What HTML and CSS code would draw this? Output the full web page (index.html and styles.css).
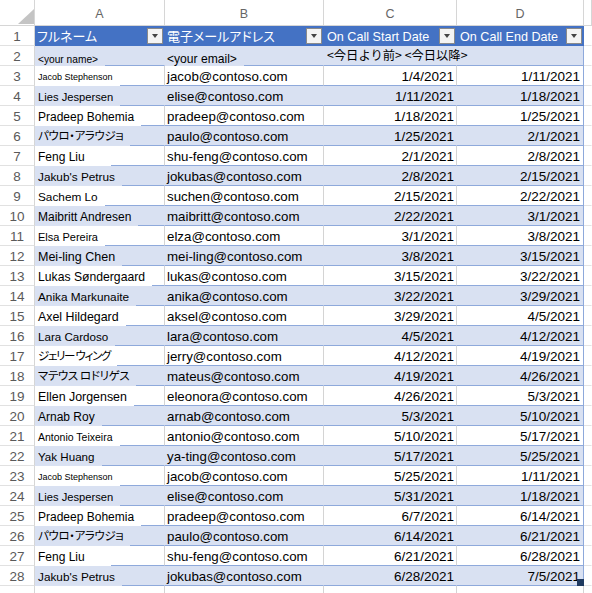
FILE: index.html
```html
<!DOCTYPE html>
<html lang="ja">
<head>
<meta charset="utf-8">
<title>On Call Schedule</title>
<link rel="stylesheet" href="styles.css">
</head>
<body>
<div class="sheet">
  <div class="row colhead">
    <div class="corner"><svg width="16" height="15" viewBox="0 0 16 15"><polygon points="16,0 16,15 0,15" fill="#c4c4c4"/></svg></div>
    <div class="ch">A</div>
    <div class="ch">B</div>
    <div class="ch">C</div>
    <div class="ch">D</div>
    <div class="ch"></div>
  </div>

  <div class="row tblhead">
    <div class="rn">1</div>
    <div class="cell"><span class="tht jp">フルネーム</span><span class="dd"></span></div>
    <div class="cell"><span class="tht jp">電子メールアドレス</span><span class="dd"></span></div>
    <div class="cell pc"><span class="tht">On Call Start Date</span><span class="dd"></span></div>
    <div class="cell pc d"><span class="tht">On Call End Date</span><span class="dd"></span></div>
    <div class="e"></div>
  </div>

  <div class="row band r2">
    <div class="rn">2</div>
    <div class="cell name"><span class="nm f102">&lt;your name&gt;</span></div>
    <div class="cell name"><span class="nm em f121">&lt;your email&gt;</span></div>
    <div class="cell pc spill"><span class="jpnote">&lt;今日より前&gt; &lt;今日以降&gt;</span></div>
    <div class="cell d"></div>
    <div class="e"></div>
  </div>

  <div class="row plain"><div class="rn">3</div><div class="cell name"><span class="nm f9">Jacob Stephenson</span></div><div class="cell mail">jacob@contoso.com</div><div class="cell num">1/4/2021</div><div class="cell num d">1/11/2021</div><div class="e"></div></div>
  <div class="row band"><div class="rn">4</div><div class="cell name"><span class="nm f112">Lies Jespersen</span></div><div class="cell mail">elise@contoso.com</div><div class="cell num">1/11/2021</div><div class="cell num d">1/18/2021</div><div class="e"></div></div>
  <div class="row plain"><div class="rn">5</div><div class="cell name"><span class="nm f12">Pradeep Bohemia</span></div><div class="cell mail">pradeep@contoso.com</div><div class="cell num">1/18/2021</div><div class="cell num d">1/25/2021</div><div class="e"></div></div>
  <div class="row band"><div class="rn">6</div><div class="cell name"><span class="nm jp">パウロ・アラウジョ</span></div><div class="cell mail">paulo@contoso.com</div><div class="cell num">1/25/2021</div><div class="cell num d">2/1/2021</div><div class="e"></div></div>
  <div class="row plain"><div class="rn">7</div><div class="cell name"><span class="nm f12 wide">Feng Liu</span></div><div class="cell mail">shu-feng@contoso.com</div><div class="cell num">2/1/2021</div><div class="cell num d">2/8/2021</div><div class="e"></div></div>
  <div class="row band"><div class="rn">8</div><div class="cell name"><span class="nm f118">Jakub's Petrus</span></div><div class="cell mail">jokubas@contoso.com</div><div class="cell num">2/8/2021</div><div class="cell num d">2/15/2021</div><div class="e"></div></div>
  <div class="row plain"><div class="rn">9</div><div class="cell name"><span class="nm f118">Sachem Lo</span></div><div class="cell mail">suchen@contoso.com</div><div class="cell num">2/15/2021</div><div class="cell num d">2/22/2021</div><div class="e"></div></div>
  <div class="row band"><div class="rn">10</div><div class="cell name"><span class="nm f12">Maibritt Andresen</span></div><div class="cell mail">maibritt@contoso.com</div><div class="cell num">2/22/2021</div><div class="cell num d">3/1/2021</div><div class="e"></div></div>
  <div class="row plain"><div class="rn">11</div><div class="cell name"><span class="nm f11">Elsa Pereira</span></div><div class="cell mail">elza@contoso.com</div><div class="cell num">3/1/2021</div><div class="cell num d">3/8/2021</div><div class="e"></div></div>
  <div class="row band"><div class="rn">12</div><div class="cell name"><span class="nm f125">Mei-ling Chen</span></div><div class="cell mail">mei-ling@contoso.com</div><div class="cell num">3/8/2021</div><div class="cell num d">3/15/2021</div><div class="e"></div></div>
  <div class="row plain"><div class="rn">13</div><div class="cell name"><span class="nm f122">Lukas Søndergaard</span></div><div class="cell mail">lukas@contoso.com</div><div class="cell num">3/15/2021</div><div class="cell num d">3/22/2021</div><div class="e"></div></div>
  <div class="row band"><div class="rn">14</div><div class="cell name"><span class="nm f118">Anika Markunaite</span></div><div class="cell mail">anika@contoso.com</div><div class="cell num">3/22/2021</div><div class="cell num d">3/29/2021</div><div class="e"></div></div>
  <div class="row plain"><div class="rn">15</div><div class="cell name"><span class="nm f124">Axel Hildegard</span></div><div class="cell mail">aksel@contoso.com</div><div class="cell num">3/29/2021</div><div class="cell num d">4/5/2021</div><div class="e"></div></div>
  <div class="row band"><div class="rn">16</div><div class="cell name"><span class="nm f116">Lara Cardoso</span></div><div class="cell mail">lara@contoso.com</div><div class="cell num">4/5/2021</div><div class="cell num d">4/12/2021</div><div class="e"></div></div>
  <div class="row plain"><div class="rn">17</div><div class="cell name"><span class="nm jp tight">ジェリー ウィング</span></div><div class="cell mail">jerry@contoso.com</div><div class="cell num">4/12/2021</div><div class="cell num d">4/19/2021</div><div class="e"></div></div>
  <div class="row band"><div class="rn">18</div><div class="cell name"><span class="nm jp">マテウス ロドリゲス</span></div><div class="cell mail">mateus@contoso.com</div><div class="cell num">4/19/2021</div><div class="cell num d">4/26/2021</div><div class="e"></div></div>
  <div class="row plain"><div class="rn">19</div><div class="cell name"><span class="nm f124">Ellen Jorgensen</span></div><div class="cell mail">eleonora@contoso.com</div><div class="cell num">4/26/2021</div><div class="cell num d">5/3/2021</div><div class="e"></div></div>
  <div class="row band"><div class="rn">20</div><div class="cell name"><span class="nm f12">Arnab Roy</span></div><div class="cell mail">arnab@contoso.com</div><div class="cell num">5/3/2021</div><div class="cell num d">5/10/2021</div><div class="e"></div></div>
  <div class="row plain"><div class="rn">21</div><div class="cell name"><span class="nm f105">Antonio Teixeira</span></div><div class="cell mail">antonio@contoso.com</div><div class="cell num">5/10/2021</div><div class="cell num d">5/17/2021</div><div class="e"></div></div>
  <div class="row band"><div class="rn">22</div><div class="cell name"><span class="nm f116">Yak Huang</span></div><div class="cell mail">ya-ting@contoso.com</div><div class="cell num">5/17/2021</div><div class="cell num d">5/25/2021</div><div class="e"></div></div>
  <div class="row plain"><div class="rn">23</div><div class="cell name"><span class="nm f9">Jacob Stephenson</span></div><div class="cell mail">jacob@contoso.com</div><div class="cell num">5/25/2021</div><div class="cell num d">1/11/2021</div><div class="e"></div></div>
  <div class="row band"><div class="rn">24</div><div class="cell name"><span class="nm f112">Lies Jespersen</span></div><div class="cell mail">elise@contoso.com</div><div class="cell num">5/31/2021</div><div class="cell num d">1/18/2021</div><div class="e"></div></div>
  <div class="row plain"><div class="rn">25</div><div class="cell name"><span class="nm f12">Pradeep Bohemia</span></div><div class="cell mail">pradeep@contoso.com</div><div class="cell num">6/7/2021</div><div class="cell num d">6/14/2021</div><div class="e"></div></div>
  <div class="row band"><div class="rn">26</div><div class="cell name"><span class="nm jp">パウロ・アラウジョ</span></div><div class="cell mail">paulo@contoso.com</div><div class="cell num">6/14/2021</div><div class="cell num d">6/21/2021</div><div class="e"></div></div>
  <div class="row plain"><div class="rn">27</div><div class="cell name"><span class="nm f12 wide">Feng Liu</span></div><div class="cell mail">shu-feng@contoso.com</div><div class="cell num">6/21/2021</div><div class="cell num d">6/28/2021</div><div class="e"></div></div>
  <div class="row band"><div class="rn">28</div><div class="cell name"><span class="nm f118">Jakub's Petrus</span></div><div class="cell mail">jokubas@contoso.com</div><div class="cell num">6/28/2021</div><div class="cell num d last">7/5/2021<span class="handle"></span></div><div class="e"></div></div>

  <div class="row blank"><div class="rn">29</div><div class="bc"></div><div class="bc"></div><div class="bc"></div><div class="bc"></div><div class="e"></div></div>
</div>
</body>
</html>
```

FILE: styles.css
```css
html, body {
  margin: 0;
  padding: 0;
  background: #ffffff;
}

body {
  font-family: "Liberation Sans", Arial, sans-serif;
  color: #000;
  overflow: hidden;
}

.sheet {
  width: 592px;
}

.row {
  display: grid;
  grid-template-columns: 35px 130px 159px 133px 127px 8px;
  height: 20px;
}

.row > div {
  box-sizing: border-box;
  border-right: 1px solid transparent;
  border-bottom: 1px solid transparent;
  min-width: 0;
  white-space: nowrap;
}

/* column letters */
.colhead {
  height: 26px;
}

.colhead > div {
  background: #fff;
  border-right-color: #d6d6d6;
  border-bottom-color: #d6d6d6;
  color: #666;
  font-size: 12.5px;
  line-height: 16px;
  display: flex;
  align-items: flex-end;
  justify-content: center;
  padding-bottom: 3px;
}

.colhead > .corner {
  justify-content: flex-end;
  padding: 0 0 1px 0;
}

.corner svg {
  display: block;
}

/* row numbers */
.rn {
  background: #fff;
  border-right-color: #d6d6d6 !important;
  border-bottom-color: #e1e1e1 !important;
  color: #5a5a5a;
  font-size: 13.5px;
  line-height: 16px;
  display: flex;
  align-items: flex-end;
  justify-content: center;
}

.blank .rn {
  padding-bottom: 0;
  align-items: flex-start;
  padding-top: 4px;
  font-size: 13px;
}

/* generic cells */
.cell {
  display: flex;
  align-items: flex-end;
  font-size: 13.3px;
  line-height: 16px;
}

.cell.spill {
  z-index: 1;
}

.e {
  background: #fff;
  border-bottom-color: #e4e4e4 !important;
}

.band .cell {
  background: #d9e1f2;
  border-right-color: #d9e1f2;
  border-bottom-color: #8ea9db;
}

.plain .cell {
  background: #fff;
  border-right-color: #d4d4d4;
  border-bottom-color: #8ea9db;
}

.row .cell.d {
  border-right-color: #8ea9db;
}

/* table header */
.tblhead .cell {
  background: #4472c4;
  border-right-color: #4472c4;
  border-bottom-color: #4472c4;
  color: #fff;
  justify-content: space-between;
  padding: 0 1px 0 2px;
}

.tblhead .cell.d {
  border-right-color: #4472c4;
}

.tblhead .cell.pc {
  padding-left: 3px;
}

.tht {
  font-size: 12.6px;
}

.tht.jp {
  font-family: "Noto Sans CJK JP", sans-serif;
  font-feature-settings: "palt";
  font-size: 13px;
  padding-bottom: 1px;
}

.dd {
  box-sizing: border-box;
  width: 16px;
  height: 16px;
  margin-bottom: 1px;
  border: 1px solid #8a8a8a;
  background: #f4f4f4;
  display: flex;
  align-items: center;
  justify-content: center;
}

.dd::after {
  content: "";
  border-left: 3.5px solid transparent;
  border-right: 3.5px solid transparent;
  border-top: 4px solid #454545;
}

/* text cells */
.mail {
  padding-left: 2px;
}

.num {
  justify-content: flex-end;
  font-size: 13.5px;
  padding-right: 2px;
}

.num.d {
  padding-right: 3px;
}

.row .cell.name {
  align-items: stretch;
  padding: 0;
}

.nm {
  display: flex;
  align-items: flex-end;
  margin-bottom: -1px;
  padding: 0 7px 1px 3px;
  background: inherit;
}

.nm.em {
  padding-left: 2px;
}

.nm.wide {
  padding-right: 26px;
}

.nm.jp {
  font-family: "Noto Sans CJK JP", sans-serif;
  font-feature-settings: "palt";
  font-size: 11.5px;
  letter-spacing: -0.4px;
  padding-bottom: 3px;
}

.nm.jp.tight {
  letter-spacing: -1.3px;
}

.r2 .nm {
  line-height: 13px;
  padding-bottom: 0;
}

.jpnote {
  font-family: "Noto Sans CJK JP", sans-serif;
  font-size: 12.3px;
  padding: 0 0 2px 0;
}

.cell.pc {
  padding-left: 3px;
}

.f9 { font-size: 9px; }
.f102 { font-size: 10.2px; }
.f105 { font-size: 10.5px; }
.f11 { font-size: 11px; }
.f112 { font-size: 11.2px; }
.f116 { font-size: 11.6px; }
.f118 { font-size: 11.8px; }
.f12 { font-size: 12px; }
.f121 { font-size: 12.1px; }
.f122 { font-size: 12.2px; }
.f124 { font-size: 12.4px; }
.f125 { font-size: 12.5px; }

/* selection / resize handle */
.cell.last {
  position: relative;
}

.handle {
  position: absolute;
  right: -1px;
  bottom: -1px;
  width: 7px;
  height: 7px;
  background: #1f3a60;
}

/* empty row under the table */
.blank .bc {
  background: #fff;
  border-right-color: #d4d4d4;
  border-bottom-color: #e1e1e1;
}
```
